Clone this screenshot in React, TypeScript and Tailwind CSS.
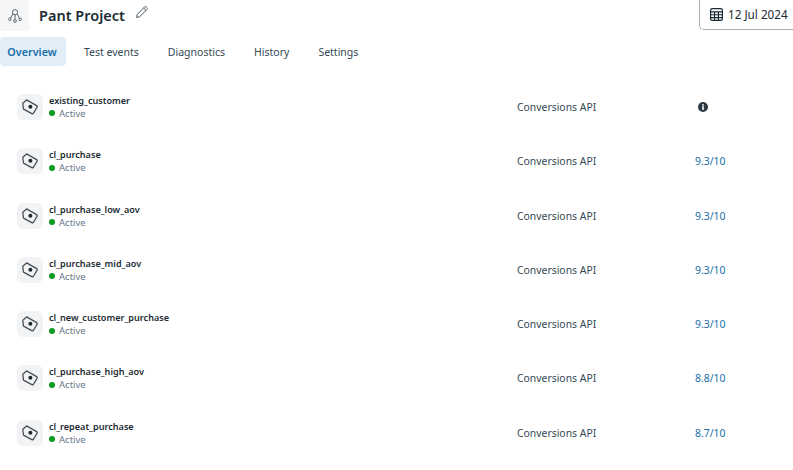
const rows = [
  { name: "existing_customer", score: "" },
  { name: "cl_purchase", score: "9.3/10" },
  { name: "cl_purchase_low_aov", score: "9.3/10" },
  { name: "cl_purchase_mid_aov", score: "9.3/10" },
  { name: "cl_new_customer_purchase", score: "9.3/10" },
  { name: "cl_purchase_high_aov", score: "8.8/10" },
  { name: "cl_repeat_purchase", score: "8.7/10" },
];

const tabs = ["Test events", "Diagnostics", "History", "Settings"];

function TagIcon() {
  return (
    <svg width="16" height="16" viewBox="0 0 16 16" fill="none">
      <path
        d="M.8 4.2 4.6.9 14.6 6.6Q15.6 7.3 15 8.4L11.6 14Q11 15.2 9.8 14.6L2 10.4Q1.5 10.1 1.4 9.6Z"
        stroke="#4a4f55"
        strokeWidth="1.3"
        strokeLinejoin="round"
      />
      <circle cx="8.4" cy="7.8" r="2" fill="#1c2b33" />
    </svg>
  );
}

function Row({ name, score }: { name: string; score: string }) {
  return (
    <div className="flex h-[54.3px] items-center">
      <div className="ml-[17px] flex h-[26px] w-[26px] items-center justify-center rounded-md bg-[#f2f3f4]">
        <TagIcon />
      </div>
      <div className="ml-[6px] w-[468px]">
        <div className="text-[9.1px] leading-[13px] font-semibold text-[#1c2b33]">{name}</div>
        <div className="flex items-center text-[9.5px] leading-[13px] text-[#67788a]">
          <span className="mr-[4px] h-[6px] w-[6px] rounded-full bg-[#0a9a1e]"></span>
          Active
        </div>
      </div>
      <div className="w-[178px] pt-[1px] text-[10.4px] leading-[15px] text-[#344854]">Conversions API</div>
      {score ? (
        <div className="pt-[1px] text-[10.4px] leading-[15px] text-[#1a6fa8]">{score}</div>
      ) : (
        <svg className="ml-[3px]" width="10" height="10" viewBox="0 0 10 10">
          <circle cx="5" cy="5" r="5" fill="#2b3a44" />
          <rect x="4.2" y="4.2" width="1.6" height="3.6" fill="#fff" />
          <rect x="4.2" y="2.1" width="1.6" height="1.5" fill="#fff" />
        </svg>
      )}
    </div>
  );
}

export default function App() {
  return (
    <div className="h-[470px] w-[793px] overflow-hidden bg-white font-['Noto_Sans',sans-serif]">
      <div className="flex h-[31px] items-start">
        <div className="flex h-[31px] w-[29px] items-center justify-center rounded-br bg-[#f5f6f7]">
          <svg width="16" height="16" viewBox="0 0 16 16" fill="none" stroke="#5d6b75" strokeWidth="1">
            <circle cx="8" cy="4.2" r="2.6" />
            <path d="M5.8 6 3.6 10M10.2 6l2.2 4M8 7v4.5" />
            <circle cx="2.9" cy="11.3" r="1.3" />
            <circle cx="13.1" cy="11.3" r="1.3" />
            <circle cx="8" cy="13" r="1.4" />
          </svg>
        </div>
        <div className="ml-[10px] mt-[5px] text-[14.5px] leading-[20px] font-semibold text-[#1c2b33]">Pant Project</div>
        <svg className="ml-[10px] mt-[5px]" width="14" height="14" viewBox="0 0 14 14" fill="none" stroke="#4a5660" strokeWidth="1">
          <path d="M2.2 9.4 9.6 2c.5-.5 1.2-.5 1.7 0l.7.7c.5.5.5 1.2 0 1.7l-7.4 7.4-3 .6.6-3Z" strokeLinejoin="round" />
          <path d="m8.6 3 2.4 2.4" />
        </svg>
        <div className="ml-auto flex h-[30px] w-[110px] shrink-0 translate-x-[16px] items-center rounded-b-[5px] border border-t-0 border-[#a9b0b5] pl-[9px] text-[11.7px] text-[#1c2b33]">
          <svg width="15" height="15" viewBox="0 0 14 14" fill="none" stroke="#1c2b33" strokeWidth="1.1">
            <rect x="1.5" y="1.5" width="11" height="11" rx="1.5" />
            <path d="M1.5 4.5h11M1.5 7.2h11M1.5 9.9h11M5.2 4.5v8M8.8 4.5v8" />
          </svg>
          <span className="ml-[4px]">12 Jul 2024</span>
        </div>
      </div>
      <div className="mt-[6px] flex h-[29px] items-center text-[10.5px] text-[#344854]">
        <div className="flex h-[29px] w-[66px] items-center justify-center rounded bg-[#e2eef7] pr-[2px] pt-[1px] text-[10.8px] font-semibold text-[#1a6fa8]">Overview</div>
        <div className="ml-[18px] flex gap-[29px] pt-[2px]">
          {tabs.map((t) => (
            <span key={t}>{t}</span>
          ))}
        </div>
      </div>
      <div className="mt-[13.8px]">
        {rows.map((r) => (
          <Row key={r.name} {...r} />
        ))}
      </div>
    </div>
  );
}
